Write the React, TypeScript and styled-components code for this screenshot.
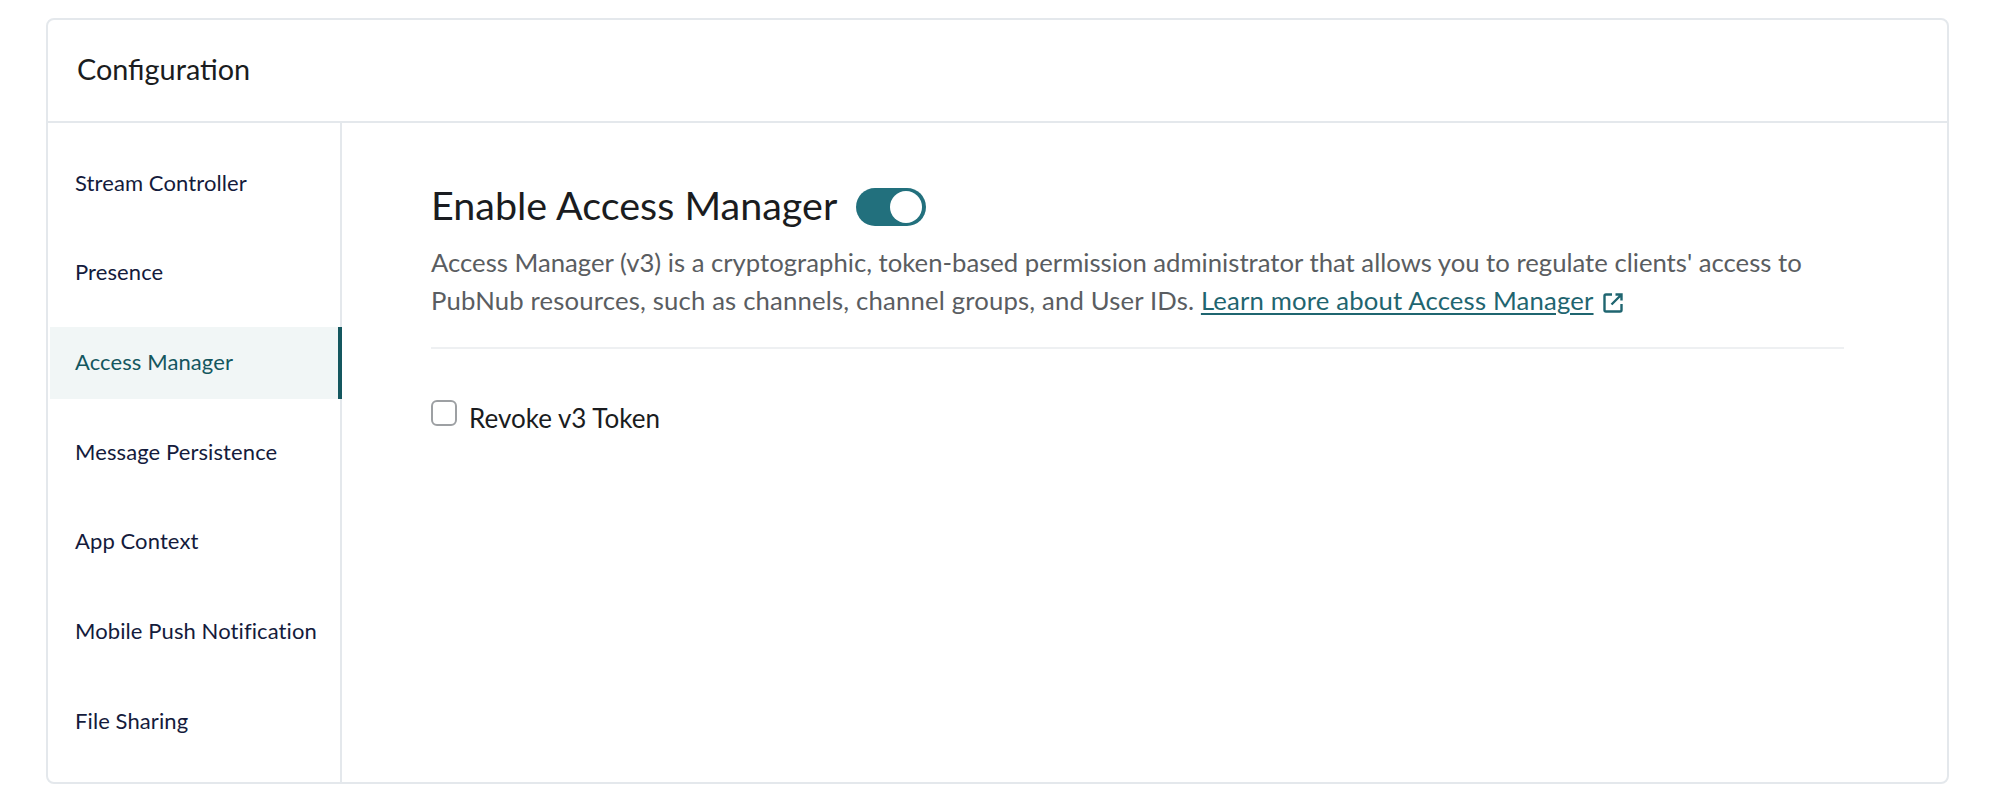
import React from 'react'
import styled, { createGlobalStyle } from 'styled-components'

const GlobalStyle = createGlobalStyle`
    html, body {
        margin: 0;
        background: #ffffff;
        font-family: Lato, "Liberation Sans", sans-serif;
    }
`

const Page = styled.div`
    box-sizing: border-box;
    width: 2000px;
    height: 799px;
    padding: 18px 51px 15px 46px;
`

const Card = styled.section`
    box-sizing: border-box;
    height: 766px;
    display: flex;
    flex-direction: column;
    border: 2px solid #e4e8ec;
    border-radius: 8px;
`

const CardHeader = styled.header`
    box-sizing: border-box;
    height: 103px;
    flex: none;
    display: flex;
    align-items: center;
    padding: 0 0 4px 29px;
    border-bottom: 2px solid #e4e8ec;
`

const Title = styled.h2`
    margin: 0;
    font-size: 28.8px;
    font-weight: 400;
    color: #1a1c20;
`

const Body = styled.div`
    flex: 1;
    display: flex;
    min-height: 0;
`

const Sidebar = styled.nav`
    box-sizing: border-box;
    width: 294px;
    flex: none;
    display: flex;
    flex-direction: column;
    gap: 17.7px;
    padding: 25px 0 0 2px;
    border-right: 2px solid #e4e8ec;
`

const NavItem = styled.a<{ $active?: boolean }>`
    box-sizing: border-box;
    height: 72px;
    flex: none;
    display: flex;
    align-items: center;
    padding: 0 0 4px 25px;
    margin-right: -2px;
    font-size: 22px;
    letter-spacing: 0.1px;
    color: ${({ $active }) => ($active ? '#14575f' : '#141b3c')};
    background: ${({ $active }) => ($active ? '#f1f6f6' : 'transparent')};
    border-right: 4px solid ${({ $active }) => ($active ? '#14575f' : 'transparent')};
`

const Main = styled.main`
    flex: 1;
    padding: 61px 103px 0 89px;
`

const HeadingRow = styled.div`
    display: flex;
    align-items: center;
    gap: 19px;
    height: 40px;
`

const Heading = styled.h1`
    margin: 0;
    font-size: 39.5px;
    font-weight: 400;
    color: #1a1c20;
`

const Toggle = styled.span`
    box-sizing: border-box;
    width: 70px;
    height: 38px;
    margin-top: 5px;
    display: flex;
    justify-content: flex-end;
    align-items: center;
    padding-right: 4px;
    border-radius: 19px;
    background: #22707d;
`

const Knob = styled.span`
    width: 32px;
    height: 32px;
    border-radius: 50%;
    background: #ffffff;
`

const Description = styled.p`
    margin: 19px 0 0;
    padding-bottom: 28px;
    font-size: 25.7px;
    line-height: 38px;
    color: #5a5d61;
    border-bottom: 2px solid #eef0f2;
`

const SecondLine = styled.span`
    letter-spacing: 0.17px;
`

const LearnLink = styled.a`
    color: #1f6570;
    letter-spacing: 0.17px;
    text-decoration: underline;
    text-underline-offset: 3px;
`

const LinkIcon = styled.svg`
    width: 22px;
    height: 22px;
    margin-left: 8px;
    vertical-align: -4px;
`

const CheckRow = styled.label`
    display: flex;
    align-items: flex-start;
    gap: 12px;
    margin-top: 51px;
`

const CheckBox = styled.span`
    box-sizing: border-box;
    width: 26px;
    height: 26px;
    flex: none;
    border: 2px solid #9da0a3;
    border-radius: 6px;
`

const CheckLabel = styled.span`
    font-size: 26px;
    line-height: 32px;
    margin-top: 2px;
    color: #1a1c20;
`

const navItems = [
    'Stream Controller',
    'Presence',
    'Access Manager',
    'Message Persistence',
    'App Context',
    'Mobile Push Notification',
    'File Sharing',
]

export default function App() {
    return (
        <Page>
            <GlobalStyle />
            <Card>
                <CardHeader>
                    <Title>Configuration</Title>
                </CardHeader>
                <Body>
                    <Sidebar>
                        {navItems.map((item) => (
                            <NavItem key={item} $active={item === 'Access Manager'}>
                                {item}
                            </NavItem>
                        ))}
                    </Sidebar>
                    <Main>
                        <HeadingRow>
                            <Heading>Enable Access Manager</Heading>
                            <Toggle>
                                <Knob />
                            </Toggle>
                        </HeadingRow>
                        <Description>
                            Access Manager (v3) is a cryptographic, token-based permission
                            administrator that allows you to regulate clients' access to{' '}
                            <SecondLine>
                                PubNub resources, such as channels, channel groups, and User IDs.
                            </SecondLine>{' '}
                            <LearnLink>Learn more about Access Manager</LearnLink>
                            <LinkIcon viewBox="0 0 22 22" fill="none" stroke="#1f6570" strokeWidth="2.4">
                                <path d="M10 2.5H4A1.5 1.5 0 0 0 2.500 4v14A1.500 1.500 0 0 0 4 19.500h14a1.500 1.500 0 0 0 1.500-1.500v-6" />
                                <path d="M13.500 2.500h6v6M19.500 2.500 9.500 12.500" />
                            </LinkIcon>
                        </Description>
                        <CheckRow>
                            <CheckBox />
                            <CheckLabel>Revoke v3 Token</CheckLabel>
                        </CheckRow>
                    </Main>
                </Body>
            </Card>
        </Page>
    )
}
